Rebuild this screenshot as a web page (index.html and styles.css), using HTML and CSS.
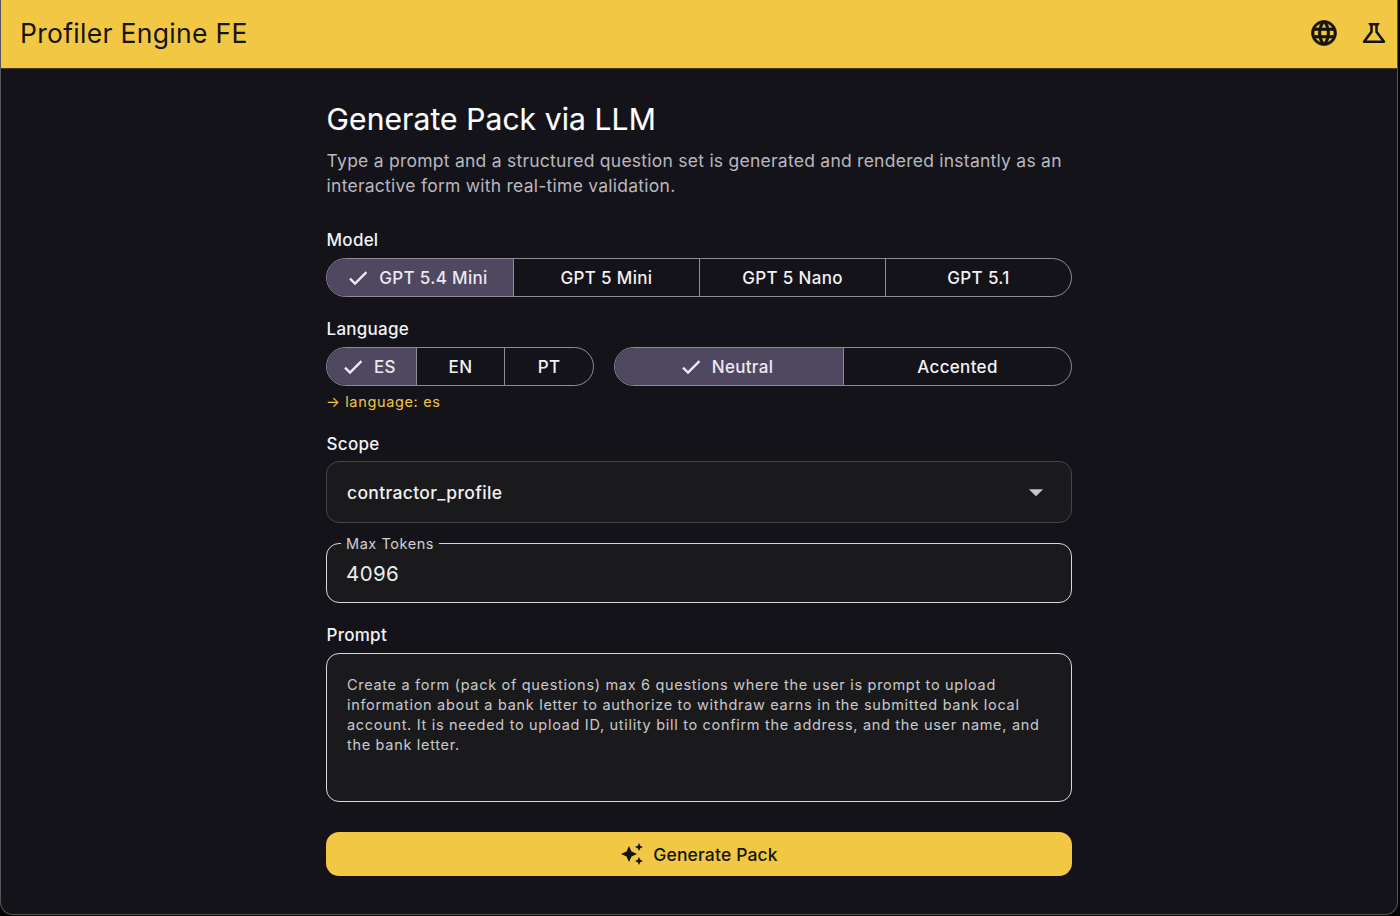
FILE: index.html
```html
<!DOCTYPE html>
<html lang="en">
<head>
<meta charset="utf-8">
<title>Profiler Engine FE</title>
<link rel="stylesheet" href="styles.css">
</head>
<body>
<div class="window">
  <header class="topbar">
    <div class="brand">Profiler Engine FE</div>
    <div class="actions">
      <svg class="icon icon-globe" viewBox="0 0 24 24" aria-hidden="true"><path d="M11.99 2C6.47 2 2 6.48 2 12s4.47 10 9.99 10C17.52 22 22 17.52 22 12S17.52 2 11.99 2zm6.93 6h-2.95c-.32-1.25-.78-2.45-1.38-3.56 1.84.63 3.37 1.91 4.33 3.56zM12 4.04c.83 1.2 1.48 2.53 1.91 3.96h-3.82c.43-1.43 1.08-2.76 1.91-3.96zM4.26 14C4.1 13.36 4 12.69 4 12s.1-1.36.26-2h3.38c-.08.66-.14 1.32-.14 2s.06 1.34.14 2H4.26zm.82 2h2.95c.32 1.25.78 2.45 1.38 3.56-1.84-.63-3.37-1.9-4.33-3.56zm2.95-8H5.08c.96-1.66 2.49-2.93 4.33-3.56C8.81 5.55 8.35 6.75 8.03 8zM12 19.96c-.83-1.2-1.48-2.53-1.91-3.96h3.82c-.43 1.43-1.08 2.76-1.91 3.96zM14.34 14H9.66c-.09-.66-.16-1.32-.16-2s.07-1.35.16-2h4.68c.09.65.16 1.32.16 2s-.07 1.34-.16 2zm.25 5.56c.6-1.11 1.06-2.31 1.38-3.56h2.95c-.96 1.65-2.49 2.93-4.33 3.56zM16.36 14c.08-.66.14-1.32.14-2s-.06-1.34-.14-2h3.38c.16.64.26 1.31.26 2s-.1 1.36-.26 2h-3.38z"/></svg>
      <svg class="icon" viewBox="0 0 24 24" aria-hidden="true"><path d="M13 11.33 18 18H6l5-6.67V6h2m2.96-2H8.04c-.42 0-.65.48-.39.81L9 6.5v4.17L3.2 18.4c-.49.66-.02 1.6.8 1.6h16c.82 0 1.29-.94.8-1.6L15 10.67V6.5l1.35-1.69c.26-.33.03-.81-.39-.81z"/></svg>
    </div>
  </header>
  <main class="page">
    <h1 class="title">Generate Pack via LLM</h1>
    <p class="lead">Type a prompt and a structured question set is generated and rendered instantly as an interactive form with real-time validation.</p>

    <div class="field-label label-model">Model</div>
    <div class="toggle toggle-model">
      <button class="seg on"><svg class="check" viewBox="0 0 24 24"><path d="M9 16.17 4.83 12l-1.42 1.41L9 19 21 7l-1.41-1.41z"/></svg>GPT 5.4 Mini</button>
      <button class="seg">GPT 5 Mini</button>
      <button class="seg">GPT 5 Nano</button>
      <button class="seg">GPT 5.1</button>
    </div>

    <div class="field-label label-lang">Language</div>
    <div class="lang-row">
      <div class="toggle toggle-lang">
        <button class="seg on"><svg class="check" viewBox="0 0 24 24"><path d="M9 16.17 4.83 12l-1.42 1.41L9 19 21 7l-1.41-1.41z"/></svg>ES</button>
        <button class="seg">EN</button>
        <button class="seg">PT</button>
      </div>
      <div class="toggle toggle-tone">
        <button class="seg on"><svg class="check" viewBox="0 0 24 24"><path d="M9 16.17 4.83 12l-1.42 1.41L9 19 21 7l-1.41-1.41z"/></svg>Neutral</button>
        <button class="seg">Accented</button>
      </div>
    </div>
    <div class="hint">→ language: es</div>

    <div class="field-label label-scope">Scope</div>
    <div class="select">
      <span>contractor_profile</span>
      <svg class="caret" viewBox="0 0 24 24"><path d="m7 10 5 5 5-5z"/></svg>
    </div>

    <fieldset class="tokens">
      <legend>Max Tokens</legend>
      <span>4096</span>
    </fieldset>

    <div class="field-label label-prompt">Prompt</div>
    <div class="prompt">Create a form (pack of questions) max 6 questions where the user is prompt to upload information about a bank letter to authorize to withdraw earns in the submitted bank local account. It is needed to upload ID, utility bill to confirm the address, and the user name, and the bank letter.</div>

    <button class="generate">
      <svg viewBox="0 0 24 24"><path d="m19 9 1.25-2.75L23 5l-2.75-1.25L19 1l-1.25 2.75L15 5l2.75 1.25zm0 6-1.25 2.75L15 19l2.75 1.25L19 23l1.25-2.75L23 19l-2.75-1.25zM11.5 9.5 9 4 6.5 9.5 1 12l5.5 2.5L9 20l2.5-5.5L17 12z"/></svg>
      Generate Pack
    </button>
  </main>
</div>
</body>
</html>
```
FILE: styles.css
```css
* { box-sizing: border-box; }
html, body { margin: 0; padding: 0; background: #050506; }
body { font-family: Inter, "Liberation Sans", sans-serif; color: #f2f1f4; }
.window {
  width: 1398px; height: 915px; overflow: hidden;
  background: #14131a;
  border: 1px solid #55555a; border-top: 0;
  border-radius: 0 0 13px 13px;
}
.topbar {
  height: 69px; background: #f2c744; color: #15140f;
  display: flex; align-items: center; justify-content: space-between;
  padding: 0 8px 2px 19px;
  border-bottom: 1px solid #3f3a24;
}
.brand { font-size: 26.5px; font-weight: 400; letter-spacing: 0.3px; }
.actions { display: flex; align-items: center; gap: 20px; }
.icon { display: block; width: 30px; height: 30px; fill: #15140f; }
.icon-globe { stroke: #15140f; stroke-width: 0.5; }
.page { width: 746px; margin-left: 325px; padding-top: 30px; }
.title { margin: 0; padding-left: 0.6px; font-size: 30px; line-height: 40px; font-weight: 400; letter-spacing: 0.1px; color: #fff; -webkit-text-stroke: 0.15px #fff; }
.lead { margin: 9px 0 0; padding-left: 0.6px; font-size: 17.5px; line-height: 25px; color: #bab8be; letter-spacing: 0.25px; }
.field-label { padding-left: 0.6px; font-size: 17px; line-height: 22px; font-weight: 500; color: #f2f1f4; letter-spacing: 0.25px; }
.label-model { margin-top: 31px; }
.label-lang { margin-top: 21px; }
.label-scope { margin-top: 20px; }
.label-prompt { margin-top: 21px; }
.toggle { display: grid; grid-auto-flow: column; grid-auto-columns: minmax(0, 1fr); height: 39px; margin-top: 7px; border: 1px solid #8d8b93; border-radius: 20px; overflow: hidden; }
.seg {
  display: flex; align-items: center; justify-content: center; gap: 9px;
  background: transparent; border: 0; border-left: 1px solid #8d8b93; padding: 0;
  font: 500 17px Inter, "Liberation Sans", sans-serif; letter-spacing: 0.33px; color: #f2f1f4;
}
.seg:first-child { border-left: 0; }
.seg.on { background: #4f4860; color: #ece8f4; padding-right: 6px; }
.check { width: 24px; height: 24px; fill: #ece8f4; stroke: #ece8f4; stroke-width: 0.5; }
.lang-row { display: flex; gap: 20px; margin-top: 7px; }
.lang-row .toggle { margin-top: 0; }
.toggle-lang { width: 268px; }
.toggle-tone { flex: 1; }
.hint { margin-top: 5px; height: 22px; font-size: 14.5px; line-height: 22px; letter-spacing: 0.65px; color: #efc544; }
.select {
  height: 62px; margin-top: 6px; background: #1a1a1c; border: 1px solid #46454a; border-radius: 13px;
  display: flex; align-items: center; justify-content: space-between; padding: 0 18px 0 20px;
  font-size: 17.5px; font-weight: 500; letter-spacing: 0.33px; color: #f2f1f4;
}
.caret { width: 34px; height: 34px; fill: #c8c7cb; }
.tokens {
  height: 69px; margin: 11px 0 0; padding: 0 20px; background: #1a1a1c;
  border: 1px solid #d8d7da; border-radius: 13px; display: block; min-width: 0;
}
.tokens legend { padding: 2px 5px 0; margin-left: -6px; font-size: 14.5px; line-height: 16px; letter-spacing: 0.55px; color: #cfced2; }
.tokens span { display: block; margin: 7px 0 0 -1px; font-size: 20.5px; line-height: 30px; letter-spacing: 0.4px; color: #ecebee; }
.prompt {
  height: 149px; margin-top: 7px; background: #1a1a1c; border: 1px solid #d8d7da; border-radius: 13px;
  padding: 21px 20px 0; font-size: 14.5px; line-height: 20px; letter-spacing: 0.69px; color: #c9c8cb;
}
.generate {
  width: 100%; height: 44px; margin-top: 30px; border: 0; border-radius: 13px; background: #f2c744; color: #15140f;
  display: flex; align-items: center; justify-content: center; gap: 9px;
  font: 500 17.5px Inter, "Liberation Sans", sans-serif; letter-spacing: 0.15px;
}
.generate svg { width: 24px; height: 24px; fill: #15140f; }
```
